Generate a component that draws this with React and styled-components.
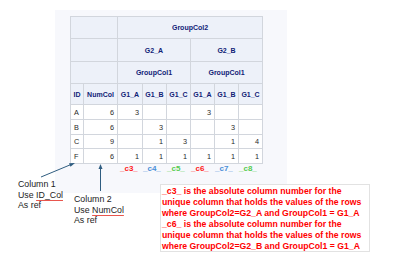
import React from "react";
import styled, { createGlobalStyle } from "styled-components";

const Global = createGlobalStyle`
  html, body { margin: 0; padding: 0; background: #ffffff; }
  body { font-family: "Liberation Sans", Arial, sans-serif; overflow: hidden; }
`;

const Page = styled.div`
  position: relative;
  width: 399px;
  height: 258px;
  overflow: hidden;
  background: #ffffff;
`;

const Panel = styled.div`
  margin: 10px 0 0 55px;
  width: 232px;
  height: 183px;
  box-sizing: border-box;
  padding: 6px 0 0 15px;
  background: #f7f8fc;
`;

const Table = styled.table`
  border-collapse: collapse;
  table-layout: fixed;
  width: 193px;
  font-family: "Liberation Sans", Arial, sans-serif;
`;

const Row = styled.tr`
  height: ${(p) => p.$h}px;
`;

const Head = styled.th`
  background: #edf1f9;
  border: 1px solid #d2d6dd;
  color: #112277;
  font-weight: bold;
  font-size: 7px;
  padding: 0;
  text-align: center;
  vertical-align: middle;
  white-space: nowrap;
  overflow: hidden;
`;

const Cell = styled.td`
  background: #ffffff;
  border: 1px solid #d2d6dd;
  color: #2a2a2a;
  font-size: 7.3px;
  padding: 0 ${(p) => (p.$left ? 0 : 3)}px 0 ${(p) => (p.$left ? 3 : 0)}px;
  text-align: ${(p) => (p.$left ? "left" : "right")};
  vertical-align: middle;
`;

const Labels = styled.div`
  display: grid;
  grid-template-columns: 48px repeat(6, 24px);
  margin-top: 0;
  padding-left: 1px;
`;

const Label = styled.span`
  font-size: 8px;
  font-weight: bold;
  line-height: 9px;
  color: ${(p) => p.$c};
  white-space: nowrap;
  padding-left: ${(p) => p.$pad || 0}px;
`;

const Notes = styled.div`
  display: flex;
  align-items: flex-start;
  margin-top: -14px;
  padding-left: 18px;
`;

const Caption = styled.div`
  width: ${(p) => p.$w}px;
  margin-top: ${(p) => p.$top}px;
  font-size: 8.8px;
  line-height: 10.5px;
  color: #222222;
  white-space: nowrap;
`;

const Squiggle = styled.span`
  text-decoration-line: underline;
  text-decoration-style: solid;
  text-decoration-color: #e8564e;
  text-decoration-thickness: 1px;
  text-underline-offset: 1.5px;
`;

const RedBox = styled.div`
  margin-top: 5px;
  width: 210px;
  height: 68px;
  box-sizing: border-box;
  border: 1px solid #e2e2e2;
  background: #ffffff;
  padding: 1px 0 0 1px;
`;

const RedLine = styled.div`
  font-size: 8.7px;
  line-height: 11px;
  font-weight: bold;
  color: #ff0000;
  white-space: nowrap;
`;

const Overlay = styled.svg`
  position: absolute;
  left: 0;
  top: 0;
  pointer-events: none;
`;

const widths = [13, 34, 25, 24, 24, 24, 24, 24];
const dataRows = [
  ["A", "6", "3", "", "", "3", "", ""],
  ["B", "6", "", "3", "", "", "3", ""],
  ["C", "9", "", "1", "3", "", "1", "4"],
  ["F", "6", "1", "1", "1", "1", "1", "1"],
];
const dataHeights = [15, 15, 14, 15];
const labels = [
  ["_c3_", "#ff1a1a"],
  ["_c4_", "#4a8fd8"],
  ["_c5_", "#56cc50"],
  ["_c6_", "#ff1a1a"],
  ["_c7_", "#4a8fd8"],
  ["_c8_", "#56cc50"],
];
const redLines = [
  "_c3_ is the absolute column number for the",
  "unique column that holds the values of the rows",
  "where GroupCol2=G2_A and GroupCol1 = G1_A",
  "_c6_ is the absolute column number for the",
  "unique column that holds the values of the rows",
  "where GroupCol2=G2_B and GroupCol1 = G1_A",
];

export default function App() {
  return (
    <Page>
      <Global />
      <Panel>
        <Table>
          <colgroup>
            {widths.map((w, i) => (
              <col key={i} style={{ width: w }} />
            ))}
          </colgroup>
          <thead>
            <Row $h={22}>
              <Head colSpan={2} />
              <Head colSpan={6}>GroupCol2</Head>
            </Row>
            <Row $h={23}>
              <Head colSpan={2} />
              <Head colSpan={3}>G2_A</Head>
              <Head colSpan={3}>G2_B</Head>
            </Row>
            <Row $h={22}>
              <Head colSpan={2} />
              <Head colSpan={3}>GroupCol1</Head>
              <Head colSpan={3}>GroupCol1</Head>
            </Row>
            <Row $h={21}>
              {["ID", "NumCol", "G1_A", "G1_B", "G1_C", "G1_A", "G1_B", "G1_C"].map((t, i) => (
                <Head key={i}>{t}</Head>
              ))}
            </Row>
          </thead>
          <tbody>
            {dataRows.map((r, ri) => (
              <Row key={ri} $h={dataHeights[ri]}>
                {r.map((v, ci) => (
                  <Cell key={ci} $left={ci === 0}>
                    {v}
                  </Cell>
                ))}
              </Row>
            ))}
          </tbody>
        </Table>
        <Labels>
          <span />
          {labels.map(([t, c], i) => (
            <Label key={i} $c={c} $pad={i === 0 ? 1 : 0}>
              {t}
            </Label>
          ))}
        </Labels>
      </Panel>
      <Notes>
        <Caption $w={56} $top={0}>
          <div>Column 1</div>
          <div>
            Use <Squiggle>ID_Col</Squiggle>
          </div>
          <div>As ref</div>
        </Caption>
        <Caption $w={86} $top={15}>
          <div>Column 2</div>
          <div>
            Use <Squiggle>NumCol</Squiggle>
          </div>
          <div>As ref</div>
        </Caption>
        <RedBox>
          {redLines.map((l, i) => (
            <RedLine key={i}>{l}</RedLine>
          ))}
        </RedBox>
      </Notes>
      <Overlay width="399" height="258" viewBox="0 0 399 258">
        <g stroke="#2f5d80" strokeWidth="1" fill="#2f5d80">
          <line x1="41" y1="177" x2="71" y2="164.5" />
          <polygon points="75,163 69,163.2 70.5,166.8" stroke="none" />
          <line x1="100.5" y1="191" x2="100.5" y2="168" />
          <polygon points="100.5,164 98.5,169 102.5,169" stroke="none" />
        </g>
      </Overlay>
    </Page>
  );
}
